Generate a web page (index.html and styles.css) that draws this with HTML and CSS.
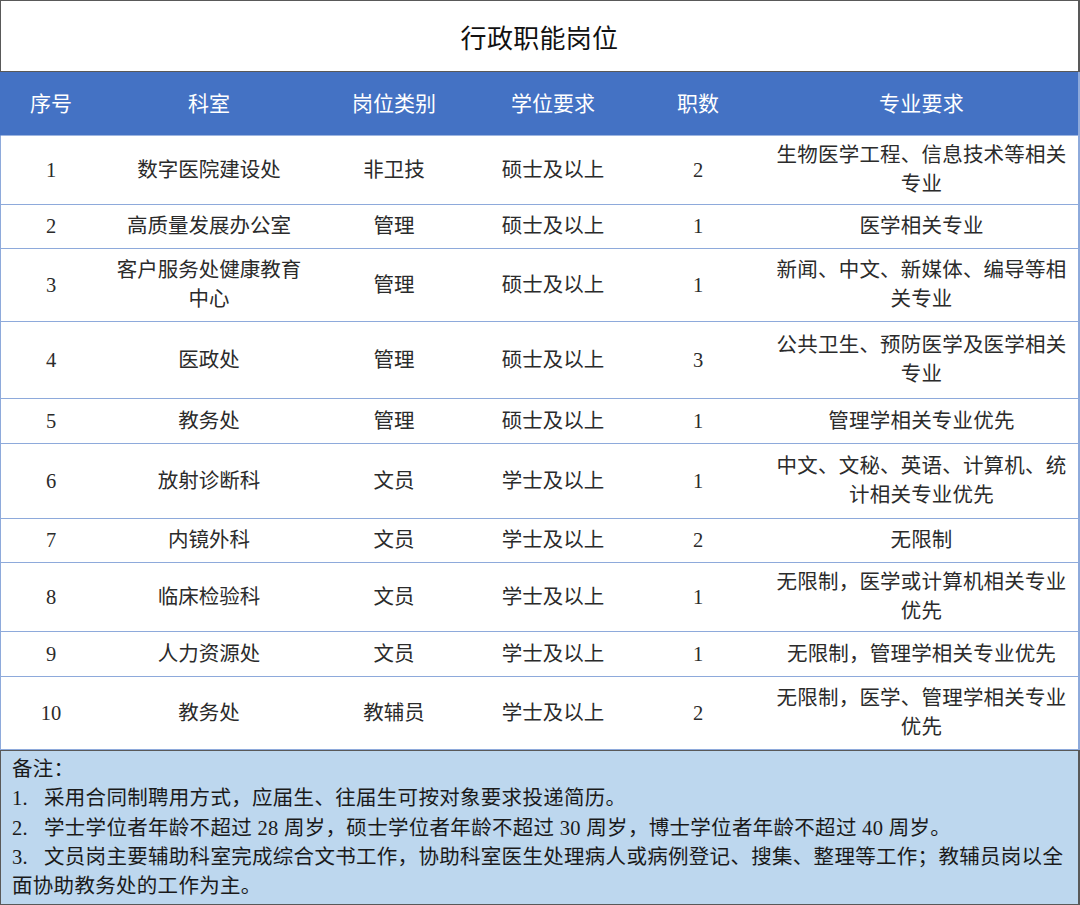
FILE: index.html
```html
<!DOCTYPE html>
<html lang="zh-CN">
<head>
<meta charset="utf-8">
<title>行政职能岗位</title>
<link rel="stylesheet" href="styles.css">
</head>
<body>
<div class="sheet">
  <div class="title">行政职能岗位</div>
  <div class="row head">
    <div>序号</div><div>科室</div><div>岗位类别</div><div>学位要求</div><div>职数</div><div>专业要求</div>
  </div>
  <div class="row r1">
    <div>1</div><div>数字医院建设处</div><div>非卫技</div><div>硕士及以上</div><div>2</div><div>生物医学工程、信息技术等相关<br>专业</div>
  </div>
  <div class="row r2">
    <div>2</div><div>高质量发展办公室</div><div>管理</div><div>硕士及以上</div><div>1</div><div>医学相关专业</div>
  </div>
  <div class="row r3">
    <div>3</div><div>客户服务处健康教育<br>中心</div><div>管理</div><div>硕士及以上</div><div>1</div><div>新闻、中文、新媒体、编导等相<br>关专业</div>
  </div>
  <div class="row r4">
    <div>4</div><div>医政处</div><div>管理</div><div>硕士及以上</div><div>3</div><div>公共卫生、预防医学及医学相关<br>专业</div>
  </div>
  <div class="row r5">
    <div>5</div><div>教务处</div><div>管理</div><div>硕士及以上</div><div>1</div><div>管理学相关专业优先</div>
  </div>
  <div class="row r6">
    <div>6</div><div>放射诊断科</div><div>文员</div><div>学士及以上</div><div>1</div><div>中文、文秘、英语、计算机、统<br>计相关专业优先</div>
  </div>
  <div class="row r7">
    <div>7</div><div>内镜外科</div><div>文员</div><div>学士及以上</div><div>2</div><div>无限制</div>
  </div>
  <div class="row r8">
    <div>8</div><div>临床检验科</div><div>文员</div><div>学士及以上</div><div>1</div><div>无限制，医学或计算机相关专业<br>优先</div>
  </div>
  <div class="row r9">
    <div>9</div><div>人力资源处</div><div>文员</div><div>学士及以上</div><div>1</div><div>无限制，管理学相关专业优先</div>
  </div>
  <div class="row r10">
    <div>10</div><div>教务处</div><div>教辅员</div><div>学士及以上</div><div>2</div><div>无限制，医学、管理学相关专业<br>优先</div>
  </div>
  <div class="notes">
    <p>备注：</p>
    <p><span class="num">1.</span>采用合同制聘用方式，应届生、往届生可按对象要求投递简历。</p>
    <p><span class="num">2.</span>学士学位者年龄不超过 28 周岁，硕士学位者年龄不超过 30 周岁，博士学位者年龄不超过 40 周岁。</p>
    <p><span class="num">3.</span>文员岗主要辅助科室完成综合文书工作，协助科室医生处理病人或病例登记、搜集、整理等工作；教辅员岗以全<br>面协助教务处的工作为主。</p>
  </div>
</div>
</body>
</html>
```

FILE: styles.css
```css
* { box-sizing: border-box; }
html, body { margin: 0; padding: 0; background: #ffffff; }
body {
  font-family: "Liberation Serif", "Noto Sans CJK SC", serif;
  color: #2b2b2b;
}
.sheet {
  width: 1080px;
}
.title {
  height: 72px;
  border: 1px solid #595959;
  border-right-width: 2px;
  display: flex;
  align-items: center;
  justify-content: center;
  font-family: "Noto Sans CJK SC", sans-serif;
  font-size: 26px;
  letter-spacing: 0.3px;
  color: #111;
}
.row {
  display: grid;
  grid-template-columns: 100px 216px 154px 164px 126px 1fr;
  border-left: 1px solid #8eaadb;
  border-right: 2px solid #8eaadb;
  border-bottom: 1px solid #8eaadb;
  font-size: 20.5px;
  line-height: 29px;
}
.row > div {
  display: flex;
  align-items: center;
  justify-content: center;
  text-align: center;
}
.row > div:last-child { padding-left: 4px; letter-spacing: 0.2px; }
.head {
  height: 64px;
  background: #4472c4;
  color: #ffffff;
  font-size: 21px;
  border-left-color: #4472c4;
  border-bottom-color: #9db5e0;
}
.head > div { padding-top: 2px; }
.r1 { height: 69px; }
.r2 { height: 44px; }
.r3 { height: 73px; }
.r4 { height: 77px; }
.r5 { height: 45px; }
.r6 { height: 75px; }
.r7 { height: 44px; }
.r8 { height: 69px; }
.r9 { height: 45px; }
.r10 { height: 73px; }
.notes {
  height: 156px;
  background: #bdd7ee;
  border: 1px solid #595959;
  border-right-width: 2px;
  border-bottom-width: 2px;
  padding: 4px 8px 0 11px;
  font-size: 20.5px;
  letter-spacing: 0.3px;
  line-height: 29.3px;
  color: #1a1a1a;
}
.notes p { margin: 0; white-space: nowrap; }
.notes .num {
  display: inline-block;
  width: 32px;
}
```
